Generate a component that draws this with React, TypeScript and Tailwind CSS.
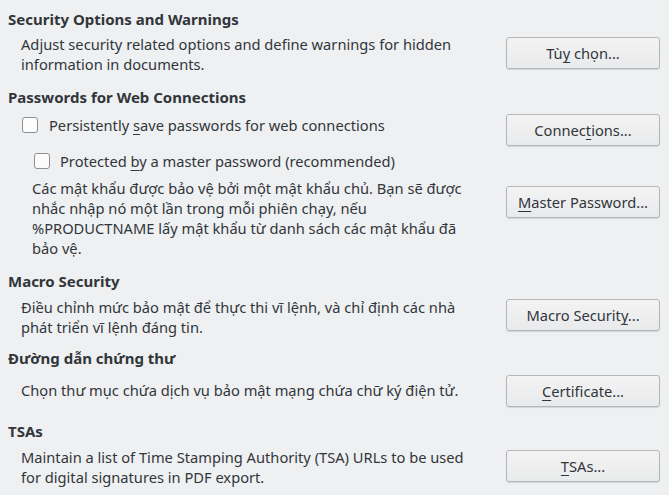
import React from "react";

const U = ({ children }: { children: React.ReactNode }) => (
  <span className="underline decoration-1 underline-offset-[3px]">{children}</span>
);

const Btn = ({ children, className = "" }: { children: React.ReactNode; className?: string }) => (
  <div
    className={
      "w-[154px] h-[32px] shrink-0 flex items-center justify-center rounded-[3px] border border-[#b4b6b8] bg-gradient-to-b from-[#f3f3f4] to-[#e9eaeb] shadow-[0_1px_1px_rgba(0,0,0,0.12)] text-[#31363b] whitespace-nowrap " +
      className
    }
  >
    <span>{children}</span>
  </div>
);

const Check = () => (
  <div className="w-[16px] h-[16px] rounded-[3px] border border-[#8d9093] bg-[#fcfcfc] shrink-0" />
);

const H = ({ children, className = "" }: { children: React.ReactNode; className?: string }) => (
  <div className={"pl-[8px] h-[20px] font-bold text-[15px] leading-[20px] whitespace-nowrap " + className}>
    {children}
  </div>
);

export default function App() {
  return (
    <div
      className="w-[669px] h-[495px] bg-[#eff0f1] text-[#31363b] text-[14.67px] leading-[20px] overflow-hidden flex flex-col"
      style={{ fontFamily: '"Noto Sans", "DejaVu Sans", sans-serif' }}
    >
      {/* Security Options and Warnings */}
      <H className="mt-[9px]">Security Options and Warnings</H>
      <div className="flex items-start mt-[5px]">
        <div className="pl-[21px] flex-1 whitespace-nowrap">
          Adjust security related options and define warnings for hidden
          <br />
          information in documents.
        </div>
        <Btn className="mt-[3px] mr-[9px]">
          Tù<U>y</U> chọn...
        </Btn>
      </div>

      {/* Passwords */}
      <H className="mt-[13px]">Passwords for Web Connections</H>
      <div className="flex items-start mt-[7px]">
        <div className="flex-1 flex items-center pl-[22px] mt-[1px] h-[20px] gap-[11px] whitespace-nowrap">
          <Check />
          <span>
            Persistently <U>s</U>ave passwords for web connections
          </span>
        </div>
        <Btn className="mr-[9px]">
          Connec<U>t</U>ions...
        </Btn>
      </div>
      <div className="flex items-center pl-[34px] mt-[5px] h-[20px] gap-[10px] whitespace-nowrap">
        <Check />
        <span>
          Protected <U>b</U>y a master password (recommended)
        </span>
      </div>
      <div className="flex items-start mt-[7px]">
        <div className="pl-[32px] flex-1 whitespace-nowrap">
          Các mật khẩu được bảo vệ bởi một mật khẩu chủ. Bạn sẽ được
          <br />
          nhắc nhập nó một lần trong mỗi phiên chạy, nếu
          <br />
          %PRODUCTNAME lấy mật khẩu từ danh sách các mật khẩu đã
          <br />
          bảo vệ.
        </div>
        <Btn className="mt-[8px] mr-[9px]">
          <U>M</U>aster Password...
        </Btn>
      </div>

      {/* Macro Security */}
      <H className="mt-[13px]">Macro Security</H>
      <div className="flex items-start mt-[6px]">
        <div className="pl-[21px] flex-1 whitespace-nowrap">
          Điều chỉnh mức bảo mật để thực thi vĩ lệnh, và chỉ định các nhà
          <br />
          phát triển vĩ lệnh đáng tin.
        </div>
        <Btn className="mt-[2px] mr-[9px]">
          Macro Securit<U>y</U>...
        </Btn>
      </div>

      {/* Certificate path */}
      <H className="mt-[11px]">Đường dẫn chứng thư</H>
      <div className="flex items-start mt-[7px]">
        <div className="pl-[21px] flex-1 whitespace-nowrap mt-[5px]">
          Chọn thư mục chứa dịch vụ bảo mật mạng chứa chữ ký điện tử.
        </div>
        <Btn className="mr-[9px]">
          <U>C</U>ertificate...
        </Btn>
      </div>

      {/* TSAs */}
      <H className="mt-[14px]">TSAs</H>
      <div className="flex items-start mt-[6px]">
        <div className="pl-[21px] flex-1 whitespace-nowrap">
          Maintain a list of Time Stamping Authority (TSA) URLs to be used
          <br />
          for digital signatures in PDF export.
        </div>
        <Btn className="mt-[3px] mr-[9px]">
          <U>T</U>SAs...
        </Btn>
      </div>
    </div>
  );
}
